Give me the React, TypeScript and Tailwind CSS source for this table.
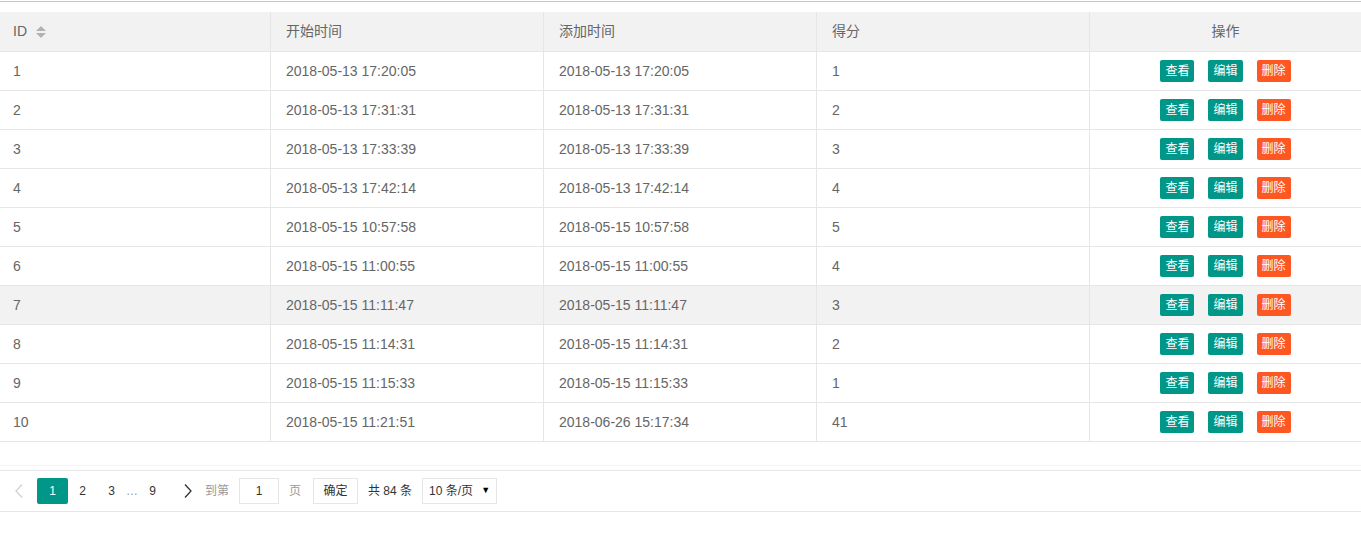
import React from "react";

const rows = [
  ["1", "2018-05-13 17:20:05", "2018-05-13 17:20:05", "1"],
  ["2", "2018-05-13 17:31:31", "2018-05-13 17:31:31", "2"],
  ["3", "2018-05-13 17:33:39", "2018-05-13 17:33:39", "3"],
  ["4", "2018-05-13 17:42:14", "2018-05-13 17:42:14", "4"],
  ["5", "2018-05-15 10:57:58", "2018-05-15 10:57:58", "5"],
  ["6", "2018-05-15 11:00:55", "2018-05-15 11:00:55", "4"],
  ["7", "2018-05-15 11:11:47", "2018-05-15 11:11:47", "3"],
  ["8", "2018-05-15 11:14:31", "2018-05-15 11:14:31", "2"],
  ["9", "2018-05-15 11:15:33", "2018-05-15 11:15:33", "1"],
  ["10", "2018-05-15 11:21:51", "2018-06-26 15:17:34", "41"],
];

const cols = "grid grid-cols-[271px_273px_273px_273px_1fr]";

function SortIcon() {
  return (
    <svg width="10" height="12" viewBox="0 0 10 12" className="ml-[9px]">
      <polygon points="0,5 5,0 10,5" fill="#b2b2b2" />
      <polygon points="0,7 10,7 5,12" fill="#b2b2b2" />
    </svg>
  );
}

function Chevron({ dir, color }: { dir: "left" | "right"; color: string }) {
  return (
    <svg width="8" height="14" viewBox="0 0 8 14">
      {dir === "left" ? (
        <polyline points="7,0.5 1,7 7,13.5" fill="none" stroke={color} strokeWidth="1.3" />
      ) : (
        <polyline points="1,0.5 7,7 1,13.5" fill="none" stroke={color} strokeWidth="1.3" />
      )}
    </svg>
  );
}

export default function App() {
  return (
    <div
      className="w-[1361px] h-[533px] bg-white overflow-hidden text-[#666]"
      style={{ fontFamily: '"Liberation Sans", "Noto Sans CJK SC", sans-serif' }}
    >
      <div className="mt-px h-px bg-[#c6c6c6]" />
      <div className="mt-[10px]">
        {/* header */}
        <div className={`${cols} h-[40px] bg-[#f2f2f2] border-b border-[#e6e6e6] text-[14px]`}>
          <div className="flex items-center pl-[13px] border-r border-[#e6e6e6]">
            <span>ID</span>
            <SortIcon />
          </div>
          <div className="flex items-center pl-[15px] border-r border-[#e6e6e6]">开始时间</div>
          <div className="flex items-center pl-[15px] border-r border-[#e6e6e6]">添加时间</div>
          <div className="flex items-center pl-[15px] border-r border-[#e6e6e6]">得分</div>
          <div className="flex items-center justify-center">操作</div>
        </div>
        {rows.map((r, i) => (
          <div
            key={r[0]}
            className={`${cols} h-[39px] border-b border-[#e6e6e6] text-[14px] ${i === 6 ? "bg-[#f2f2f2]" : "bg-white"}`}
          >
            <div className="flex items-center pl-[13px] border-r border-[#e6e6e6]">{r[0]}</div>
            <div className="flex items-center pl-[15px] border-r border-[#e6e6e6]">{r[1]}</div>
            <div className="flex items-center pl-[15px] border-r border-[#e6e6e6]">{r[2]}</div>
            <div className="flex items-center pl-[15px] border-r border-[#e6e6e6]">{r[3]}</div>
            <div className="flex items-center justify-center gap-[14px] text-[12px] text-white">
              <span className="h-[22px] leading-[22px] px-[5px] rounded-[2px] bg-[#009688]">查看</span>
              <span className="h-[22px] leading-[22px] px-[5px] rounded-[2px] bg-[#009688]">编辑</span>
              <span className="h-[22px] leading-[22px] px-[5px] rounded-[2px] bg-[#ff5722]">删除</span>
            </div>
          </div>
        ))}
        <div className="h-[23px]" />
        <div className="h-[5px] border-t border-[#f3f3f3]" />
        {/* pagination */}
        <div className="h-[42px] border-t border-b border-[#e6e6e6] pt-[7px] pl-[8px] text-[12px]">
          <div className="flex items-center h-[26px]">
            <div className="w-[22px] h-[26px] flex items-center justify-center">
              <Chevron dir="left" color="#d2d2d2" />
            </div>
            <div className="ml-[7px] w-[31px] h-[26px] leading-[26px] text-center text-white bg-[#009688] rounded-[2px]">
              1
            </div>
            <div className="w-[29px] text-center text-[#333] leading-[26px]">2</div>
            <div className="w-[29px] text-center text-[#333] leading-[26px]">3</div>
            <div className="w-[12px] text-center text-[#999] leading-[26px]">…</div>
            <div className="w-[29px] text-center text-[#333] leading-[26px]">9</div>
            <div className="ml-[7px] w-[28px] h-[26px] flex items-center justify-center">
              <Chevron dir="right" color="#333" />
            </div>
            <span className="ml-[3px] text-[#999]">到第</span>
            <div className="ml-[10px] w-[40px] h-[26px] border border-[#e6e6e6] flex items-center justify-center text-[#333]">
              1
            </div>
            <span className="ml-[10px] text-[#999]">页</span>
            <div className="ml-[12px] w-[45px] h-[26px] border border-[#e6e6e6] flex items-center justify-center text-[#333]">
              确定
            </div>
            <span className="ml-[10px] text-[#333]">共 84 条</span>
            <div className="ml-[10px] w-[75px] h-[26px] border border-[#e6e6e6] flex items-center pl-[6px] pr-[6px] text-[#333]">
              <span>10 条/页</span>
              <span className="ml-auto text-[9px] text-[#000]">▼</span>
            </div>
          </div>
        </div>
      </div>
    </div>
  );
}
